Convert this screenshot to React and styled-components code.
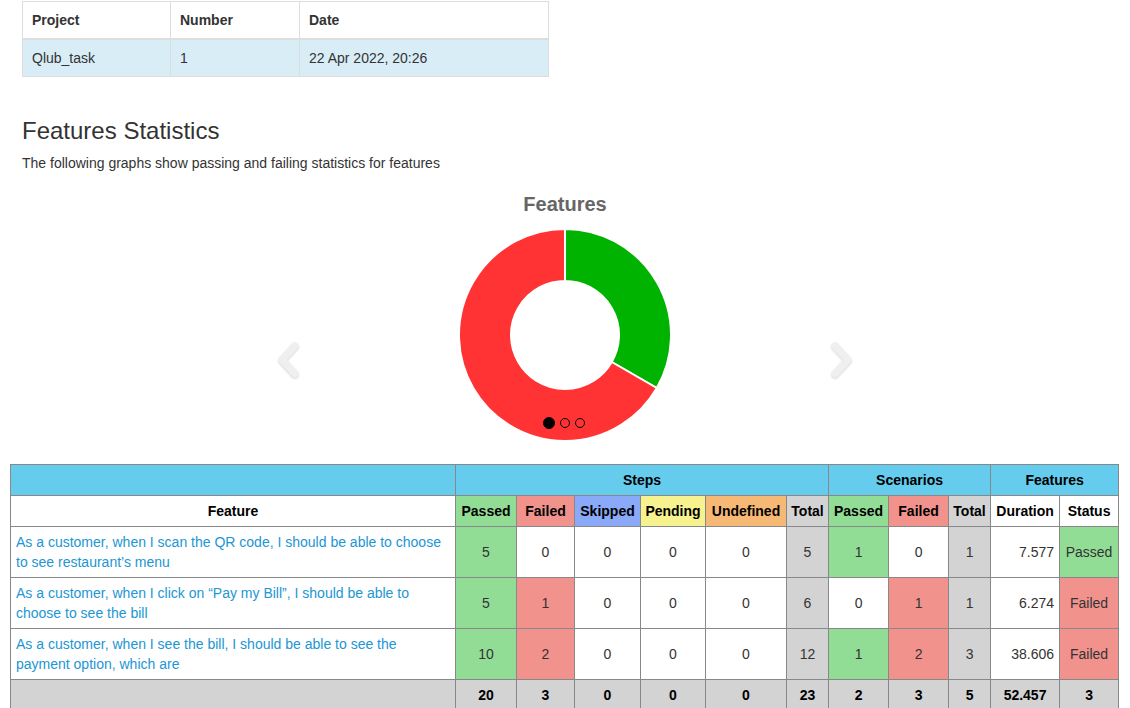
import React from "react";
import styled, { createGlobalStyle } from "styled-components";

const GlobalStyle = createGlobalStyle`
  html, body {
    margin: 0;
    padding: 0;
    background: #fff;
  }
  body {
    font-family: "Liberation Sans", Arial, sans-serif;
    font-size: 14px;
    color: #333;
  }
`;

const Page = styled.div`
  width: 1130px;
  padding-top: 1px;
`;

const Intro = styled.section`
  padding: 0 22px;
`;

const InfoTable = styled.table`
  width: 526px;
  border-collapse: collapse;
  table-layout: fixed;
  border: 1px solid #ddd;

  th, td {
    text-align: left;
    padding: 8px 9px;
    line-height: 20px;
    border: 1px solid #ddd;
  }
  th {
    font-weight: bold;
    border-bottom: 2px solid #ddd;
  }
  tbody td {
    background: #d9edf7;
  }
`;

const Heading = styled.h3`
  margin: 41px 0 0;
  font-size: 24px;
  font-weight: 400;
  line-height: 26px;
  color: #333;
`;

const Lead = styled.p`
  margin: 9px 0 0;
  line-height: 20px;
`;

const ChartTitle = styled.div`
  margin-top: 19px;
  text-align: center;
  font-size: 20px;
  font-weight: bold;
  line-height: 24px;
  color: #666;
`;

const Carousel = styled.div`
  margin-top: 13px;
  display: flex;
  justify-content: center;
  gap: 159px;
`;

const Arrow = styled.svg`
  width: 24px;
  height: 38px;
  margin-top: 112px;
  filter: drop-shadow(0 1px 1px rgba(0, 0, 0, 0.18));
`;

const ChartBox = styled.div`
  position: relative;
  width: 212px;
  height: 212px;
`;

const Dots = styled.div`
  position: absolute;
  left: -3px;
  right: 0;
  top: 188px;
  display: flex;
  justify-content: center;
  gap: 5px;
`;

const Dot = styled.span`
  width: ${(p) => (p.$active ? "12px" : "10px")};
  height: ${(p) => (p.$active ? "12px" : "10px")};
  margin-top: ${(p) => (p.$active ? "0" : "1px")};
  border-radius: 50%;
  box-sizing: border-box;
  border: 1px solid #000;
  background: ${(p) => (p.$active ? "#000" : "transparent")};
`;

const StatsWrap = styled.div`
  margin: 23px 12px 0 10px;
`;

const StatsTable = styled.table`
  width: 1108px;
  border-collapse: collapse;
  table-layout: fixed;

  th, td {
    border: 1px solid #888;
    padding: 0 5px;
    font-size: 14px;
  }
`;

const colors = {
  head: "#66ccee",
  passed: "#92dd96",
  failed: "#f2928c",
  skipped: "#8aa9f9",
  pending: "#f5f28f",
  undefined: "#f5b975",
  total: "#d3d3d3",
  none: "#fff",
};

const HeadCell = styled.th`
  height: 30px;
  padding: 0 !important;
  background: ${(p) => colors[p.$tone || "none"]};
  color: #000;
  font-weight: bold;
  text-align: center;
  white-space: nowrap;
`;

const Cell = styled.td`
  height: 50px;
  background: ${(p) => colors[p.$tone || "none"]};
  color: #333;
  text-align: ${(p) => p.$align || "center"};
  line-height: 20px;
`;

const FeatureCell = styled.td`
  height: 50px;
  line-height: 20px;
`;

const FeatureLink = styled.a`
  color: #2196d3;
  text-decoration: none;
`;

const FootCell = styled.td`
  height: 30px;
  background: #d3d3d3;
  color: #000;
  font-weight: bold;
  text-align: center;
`;

function polar(cx, cy, r, deg) {
  const a = (deg * Math.PI) / 180;
  return [cx + r * Math.sin(a), cy - r * Math.cos(a)];
}

function slice(cx, cy, R, r, from, to) {
  const large = to - from > 180 ? 1 : 0;
  const [x1, y1] = polar(cx, cy, R, from);
  const [x2, y2] = polar(cx, cy, R, to);
  const [x3, y3] = polar(cx, cy, r, to);
  const [x4, y4] = polar(cx, cy, r, from);
  return `M${x1} ${y1} A${R} ${R} 0 ${large} 1 ${x2} ${y2} L${x3} ${y3} A${r} ${r} 0 ${large} 0 ${x4} ${y4} Z`;
}

function Donut() {
  return (
    <svg width="212" height="212" viewBox="0 0 212 212">
      <path d={slice(106, 106, 106, 54, 0, 120)} fill="#00b300" stroke="#fff" strokeWidth="2" />
      <path d={slice(106, 106, 106, 54, 120, 360)} fill="#ff3333" stroke="#fff" strokeWidth="2" />
    </svg>
  );
}

const features = [
  {
    name: "As a customer, when I scan the QR code, I should be able to choose to see restaurant’s menu",
    steps: [5, 0, 0, 0, 0, 5],
    scen: [1, 0, 1],
    duration: "7.577",
    status: "Passed",
  },
  {
    name: "As a customer, when I click on “Pay my Bill”, I should be able to choose to see the bill",
    steps: [5, 1, 0, 0, 0, 6],
    scen: [0, 1, 1],
    duration: "6.274",
    status: "Failed",
  },
  {
    name: "As a customer, when I see the bill, I should be able to see the payment option, which are",
    steps: [10, 2, 0, 0, 0, 12],
    scen: [1, 2, 3],
    duration: "38.606",
    status: "Failed",
  },
];

const widths = [445, 61, 58, 66, 65, 81, 42, 60, 60, 42, 69, 59];

export default function App() {
  return (
    <Page>
      <GlobalStyle />
      <Intro>
        <InfoTable>
          <colgroup>
            <col style={{ width: 148 }} />
            <col style={{ width: 129 }} />
            <col style={{ width: 249 }} />
          </colgroup>
          <thead>
            <tr>
              <th>Project</th>
              <th>Number</th>
              <th>Date</th>
            </tr>
          </thead>
          <tbody>
            <tr>
              <td>Qlub_task</td>
              <td>1</td>
              <td>22 Apr 2022, 20:26</td>
            </tr>
          </tbody>
        </InfoTable>
        <Heading>Features Statistics</Heading>
        <Lead>The following graphs show passing and failing statistics for features</Lead>
      </Intro>

      <ChartTitle>Features</ChartTitle>
      <Carousel>
        <Arrow viewBox="0 0 24 38">
          <polyline points="19,5 6,19 19,33" fill="none" stroke="#efefef" strokeWidth="7" strokeLinecap="round" strokeLinejoin="round" />
        </Arrow>
        <ChartBox>
          <Donut />
          <Dots>
            <Dot $active />
            <Dot />
            <Dot />
          </Dots>
        </ChartBox>
        <Arrow viewBox="0 0 24 38">
          <polyline points="5,5 18,19 5,33" fill="none" stroke="#efefef" strokeWidth="7" strokeLinecap="round" strokeLinejoin="round" />
        </Arrow>
      </Carousel>

      <StatsWrap>
        <StatsTable>
          <colgroup>
            {widths.map((w, i) => (
              <col key={i} style={{ width: w }} />
            ))}
          </colgroup>
          <thead>
            <tr>
              <HeadCell $tone="head" />
              <HeadCell $tone="head" colSpan={6}>Steps</HeadCell>
              <HeadCell $tone="head" colSpan={3}>Scenarios</HeadCell>
              <HeadCell $tone="head" colSpan={2}>Features</HeadCell>
            </tr>
            <tr>
              <HeadCell>Feature</HeadCell>
              <HeadCell $tone="passed">Passed</HeadCell>
              <HeadCell $tone="failed">Failed</HeadCell>
              <HeadCell $tone="skipped">Skipped</HeadCell>
              <HeadCell $tone="pending">Pending</HeadCell>
              <HeadCell $tone="undefined">Undefined</HeadCell>
              <HeadCell $tone="total">Total</HeadCell>
              <HeadCell $tone="passed">Passed</HeadCell>
              <HeadCell $tone="failed">Failed</HeadCell>
              <HeadCell $tone="total">Total</HeadCell>
              <HeadCell>Duration</HeadCell>
              <HeadCell>Status</HeadCell>
            </tr>
          </thead>
          <tbody>
            {features.map((f) => (
              <tr key={f.name}>
                <FeatureCell>
                  <FeatureLink href="#">{f.name}</FeatureLink>
                </FeatureCell>
                <Cell $tone={f.steps[0] > 0 ? "passed" : "none"}>{f.steps[0]}</Cell>
                <Cell $tone={f.steps[1] > 0 ? "failed" : "none"}>{f.steps[1]}</Cell>
                <Cell>{f.steps[2]}</Cell>
                <Cell>{f.steps[3]}</Cell>
                <Cell>{f.steps[4]}</Cell>
                <Cell $tone="total">{f.steps[5]}</Cell>
                <Cell $tone={f.scen[0] > 0 ? "passed" : "none"}>{f.scen[0]}</Cell>
                <Cell $tone={f.scen[1] > 0 ? "failed" : "none"}>{f.scen[1]}</Cell>
                <Cell $tone="total">{f.scen[2]}</Cell>
                <Cell $align="right">{f.duration}</Cell>
                <Cell $tone={f.status === "Passed" ? "passed" : "failed"}>{f.status}</Cell>
              </tr>
            ))}
          </tbody>
          <tfoot>
            <tr>
              <FootCell />
              <FootCell>20</FootCell>
              <FootCell>3</FootCell>
              <FootCell>0</FootCell>
              <FootCell>0</FootCell>
              <FootCell>0</FootCell>
              <FootCell>23</FootCell>
              <FootCell>2</FootCell>
              <FootCell>3</FootCell>
              <FootCell>5</FootCell>
              <FootCell>52.457</FootCell>
              <FootCell>3</FootCell>
            </tr>
          </tfoot>
        </StatsTable>
      </StatsWrap>
    </Page>
  );
}
